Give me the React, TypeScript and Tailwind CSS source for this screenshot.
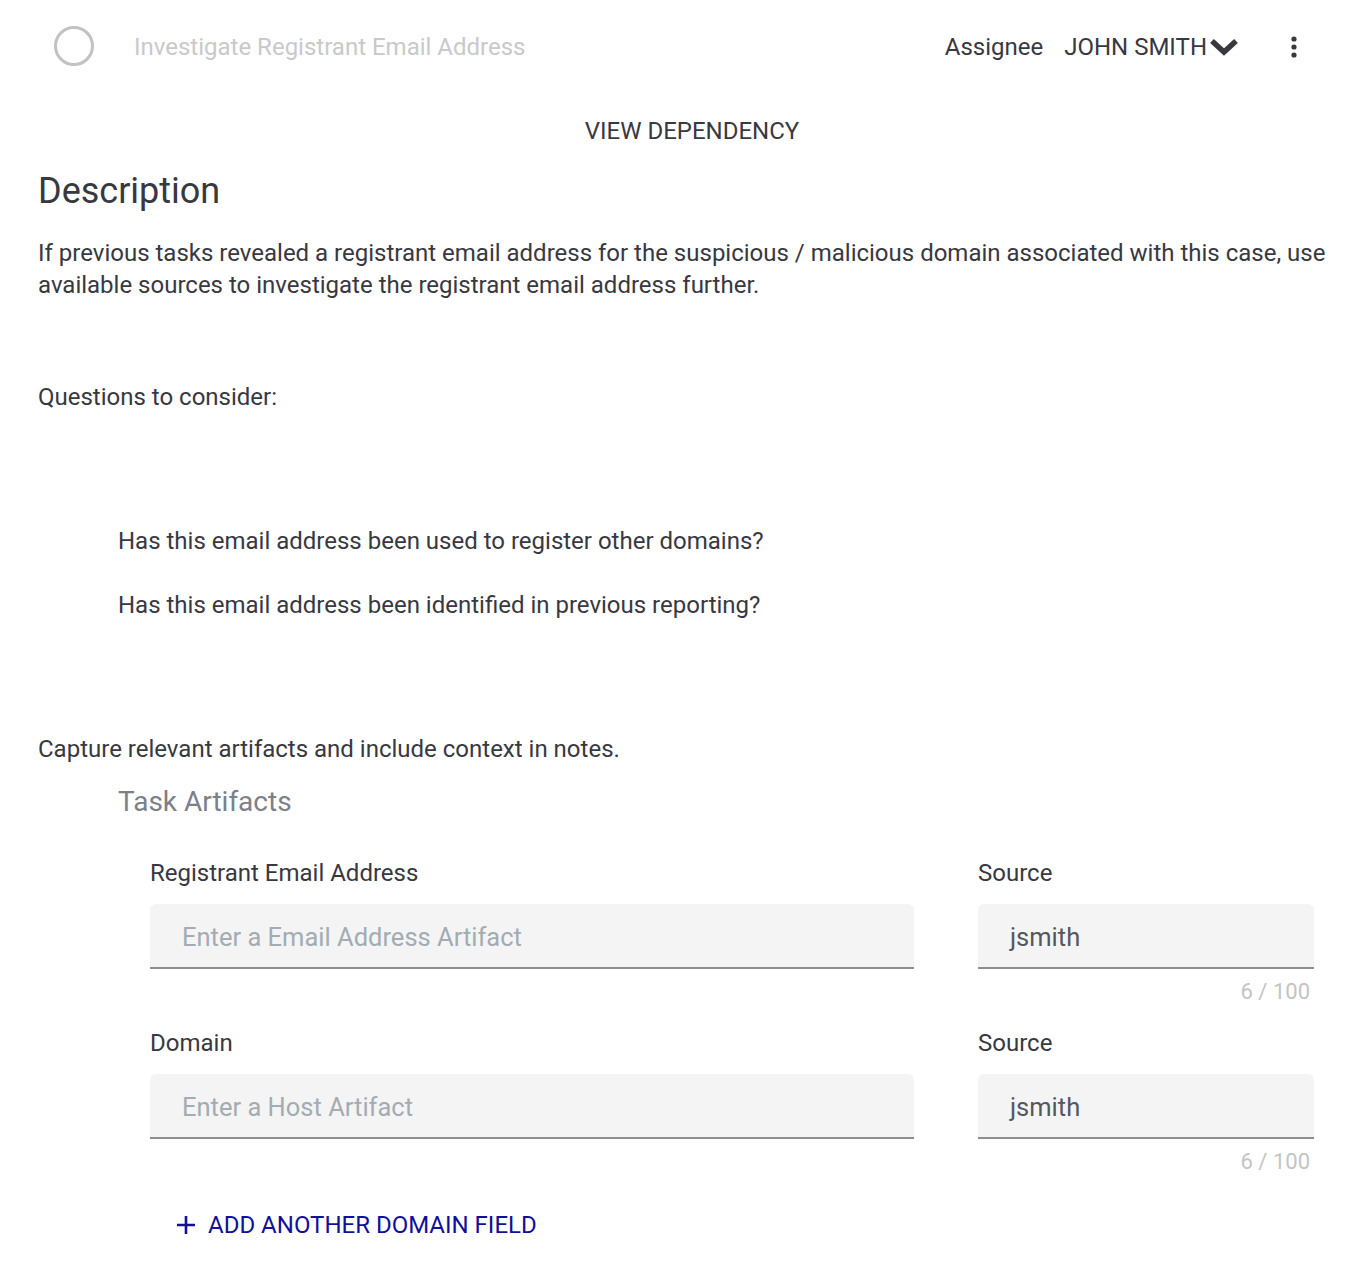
import React from 'react';

const font = { fontFamily: 'Roboto, "Liberation Sans", sans-serif' };

const ArtifactRow: React.FC<{ label: string; placeholder: string; source: string }> = ({ label, placeholder, source }) => (
    <div className="flex gap-[64px]">
        <div className="w-[764px] shrink-0">
            <div className="h-[32px] leading-[32px] text-[24px] text-[#38383f]">{label}</div>
            <div className="mt-[15px] h-[65px] bg-[#f4f4f4] rounded-t-[6px] border-b-2 border-[#8e8e8e] flex items-center pl-[32px] pt-[3px] text-[25.5px] text-[#a2acb2]">
                {placeholder}
            </div>
        </div>
        <div className="w-[336px] shrink-0">
            <div className="h-[32px] leading-[32px] text-[24px] text-[#38383f]">Source</div>
            <div className="mt-[15px] h-[65px] bg-[#f4f4f4] rounded-t-[6px] border-b-2 border-[#8e8e8e] flex items-center pl-[32px] pt-[3px] text-[25.5px] text-[#54585e]">
                {source}
            </div>
            <div className="mt-[11px] h-[24px] leading-[24px] text-right pr-[4px] text-[22px] text-[#c4c4c4]">
                {source.length} / 100
            </div>
        </div>
    </div>
);

export default function App() {
    return (
        <div className="w-[1348px] min-h-[1284px] bg-white text-[#38383f]" style={font}>
            {/* Header */}
            <div className="h-[92px] flex items-center pl-[54px] pr-[50px]">
                <div className="w-[40px] h-[40px] rounded-full border-[3px] border-[#c2c2c2]" />
                <div className="ml-[40px] mt-[2px] text-[24px] text-[#c9c9c9]">Investigate Registrant Email Address</div>
                <div className="ml-auto mt-[2px] flex items-center text-[24px] text-[#38383f]">
                    <span>Assignee</span>
                    <span className="ml-[21px]">JOHN SMITH</span>
                    <svg width="32" height="22" viewBox="0 0 32 22" className="ml-[1px] -mt-[2px]">
                        <polyline points="4,6 16,17 28,6" fill="none" stroke="#38383f" strokeWidth="5.5" strokeLinejoin="miter" />
                    </svg>
                    <svg width="8" height="24" viewBox="0 0 8 24" className="ml-[50px]">
                        <circle cx="4" cy="4" r="2.6" fill="#38383f" />
                        <circle cx="4" cy="12" r="2.6" fill="#38383f" />
                        <circle cx="4" cy="20" r="2.6" fill="#38383f" />
                    </svg>
                </div>
            </div>

            <div className="mt-[23px] h-[32px] leading-[32px] text-center text-[24px] pl-[36px]">VIEW DEPENDENCY</div>

            <div className="pl-[38px]">
                <h2 className="mt-[22px] h-[44px] leading-[44px] text-[36px]">Description</h2>
                <p className="mt-[24px] text-[24px] leading-[32px]">
                    If previous tasks revealed a registrant email address for the suspicious / malicious domain associated with this case, use available sources to investigate the registrant email address further.
                </p>
                <p className="mt-[80px] text-[24px] leading-[32px]">Questions to consider:</p>
                <div className="pl-[80px]">
                    <p className="mt-[112px] text-[24px] leading-[32px]">Has this email address been used to register other domains?</p>
                    <p className="mt-[32px] text-[24px] leading-[32px]">Has this email address been identified in previous reporting?</p>
                </div>
                <p className="mt-[112px] text-[24px] leading-[32px]">Capture relevant artifacts and include context in notes.</p>

                <div className="pl-[80px]">
                    <h3 className="mt-[19px] h-[36px] leading-[36px] text-[28px] text-[#7c8088]">Task Artifacts</h3>
                    <div className="pl-[32px] mt-[37px]">
                        <ArtifactRow label="Registrant Email Address" placeholder="Enter a Email Address Artifact" source="jsmith" />
                        <div className="mt-[23px]">
                            <ArtifactRow label="Domain" placeholder="Enter a Host Artifact" source="jsmith" />
                        </div>
                        <div className="mt-[35px] h-[32px] flex items-center pl-[26px] text-[#10109c] text-[24px]">
                            <svg width="20" height="20" viewBox="0 0 20 20">
                                <path d="M10 1v18M1 10h18" stroke="#10109c" strokeWidth="2.6" fill="none" />
                            </svg>
                            <span className="ml-[12px]">ADD ANOTHER DOMAIN FIELD</span>
                        </div>
                    </div>
                </div>
            </div>
        </div>
    );
}
